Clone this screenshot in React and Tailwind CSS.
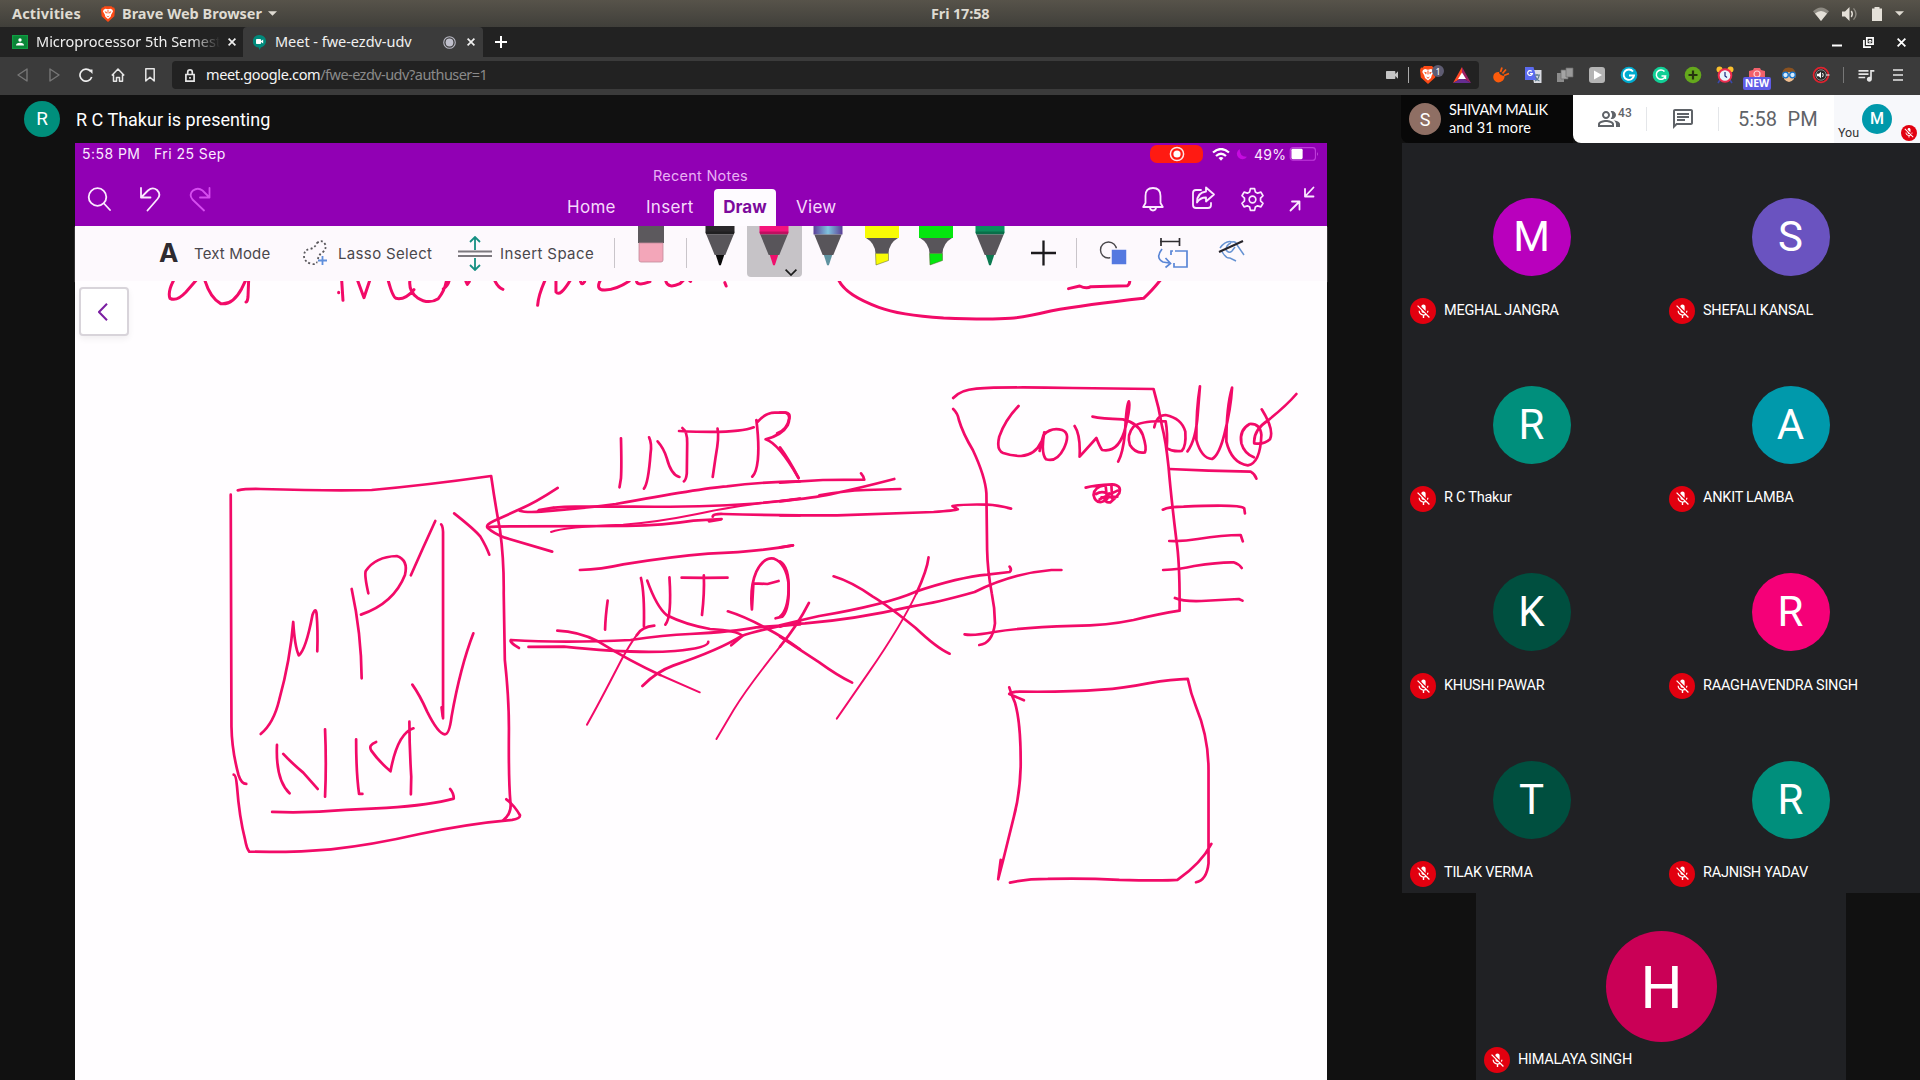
import React from "react";
import { MdMicOff, MdOutlinePeopleAlt, MdOutlineChat, MdVideocam, MdQueueMusic } from "react-icons/md";

const PEOPLE = [
  { name: "MEGHAL JANGRA", color: "bg-[#b900bd]" },
  { name: "SHEFALI KANSAL", color: "bg-[#6a53c0]" },
  { name: "R C Thakur", color: "bg-[#008f7c]" },
  { name: "ANKIT LAMBA", color: "bg-[#0099ab]" },
  { name: "KHUSHI PAWAR", color: "bg-[#004f3f]" },
  { name: "RAAGHAVENDRA SINGH", color: "bg-[#f50078]" },
  { name: "TILAK VERMA", color: "bg-[#004f3f]" },
  { name: "RAJNISH YADAV", color: "bg-[#008f7c]" },
];

function Brave({ className }) {
  return (
    <svg viewBox="0 0 16 18" className={className}>
      <path d="M4 0h8l1.5 1.7L15 1.6l1 2.4-.8 7.5L8 18 .8 11.5 0 4l1-2.4 1.5.1z" fill="#fb4a16" />
      <path d="M3 4l2-1 3 .7L11 3l2 1 .7 2-2 3.6L11 12l-3 2.6L5 12l-.7-2.4-2-3.6z" fill="#fff" />
      <path d="M4 5.8l2.8.8-.8 2zM12 5.8l-2.8.8.8 2zM6 10.6l2 1 2-1-2 2.2zM7.5 4.5h1v4h-1z" fill="#fb4a16" />
    </svg>
  );
}

function Cross({ className }) {
  return (
    <svg viewBox="0 0 8 8" className={className} stroke="#f0f0f0" strokeWidth="1.7" fill="none">
      <path d="M.6.6l6.8 6.8M7.4.6L.6 7.4" />
    </svg>
  );
}

function SystemBar() {
  return (
    <div className="flex h-[27px] items-center bg-gradient-to-b from-[#57534a] to-[#403f3a] text-[14.5px] font-bold text-[#dfdbd2]">
      <span className="ml-[12px] w-[89px] whitespace-nowrap tracking-[0.15px]">Activities</span>
      <Brave className="h-[16px] w-[14px] shrink-0" />
      <span className="ml-[7px] w-[146px] whitespace-nowrap tracking-[0px]">Brave Web Browser</span>
      <svg viewBox="0 0 10 5" className="h-[5px] w-[9px]" fill="#dfdbd2"><path d="M0 0h10L5 5z" /></svg>
      <span className="ml-[654px] w-[70px] whitespace-nowrap tracking-[-0.15px]">Fri 17:58</span>
      <svg viewBox="0 0 16 14" className="ml-[812px] h-[14px] w-[16px]">
        <path d="M8 14L0 4.2Q8-3.4 16 4.2z" fill="#8d8a82" />
        <path d="M8 14L2 6.6q6-5 12 0z" fill="#e4e0d8" />
      </svg>
      <svg viewBox="0 0 16 14" className="ml-[13px] h-[14px] w-[16px]" fill="none" stroke="#e4e0d8" strokeWidth="1.4">
        <path d="M0 4.5h3L7.5 0v14L3 9.5H0z" fill="#e4e0d8" stroke="none" />
        <path d="M9.3 4q2 3 0 6" /><path d="M11.5 1.4q5 5.6 0 11.2" stroke="#8d8a82" />
      </svg>
      <svg viewBox="0 0 10 14" className="ml-[14px] h-[14px] w-[10px]" fill="#e4e0d8"><path d="M2.5 0h5v1.4H10V14H0V1.4h2.5z" /></svg>
      <svg viewBox="0 0 10 5" className="ml-[13px] h-[5px] w-[9px]" fill="#dfdbd2"><path d="M0 0h10L5 5z" /></svg>
    </div>
  );
}

function TabStrip() {
  return (
    <div className="flex h-[30px] items-center bg-[#222222] text-[14.5px] text-[#f0f0f0]">
      <svg viewBox="0 0 16 14" className="ml-[12px] h-[14px] w-[16px] shrink-0">
        <path d="M0 0h16v14H0z" fill="#0f9d43" /><path d="M1.2 1.2h13.6v11.6H1.2z" fill="#0a8537" />
        <circle cx="8" cy="5" r="1.7" fill="#fff" /><path d="M4 10.4q0-2.6 4-2.6t4 2.6z" fill="#fff" />
      </svg>
      <span className="ml-[8px] w-[184px] overflow-hidden whitespace-nowrap tracking-[-0.02px] [mask-image:linear-gradient(to_right,#000_155px,transparent_184px)]">Microprocessor 5th Semest</span>
      <Cross className="ml-[8px] h-[8px] w-[8px]" />
      <div className="ml-[7px] flex h-[30px] w-[240px] items-center rounded-t-[4px] bg-[#3b3b3b]">
        <svg viewBox="0 0 13 15" className="ml-[10px] h-[15px] w-[13px]">
          <path d="M6.5 0a6.3 6.3 0 0 1 1.3 12.5L6.5 15l-.8-2.4A6.3 6.3 0 0 1 6.5 0z" fill="#00897b" />
          <rect x="3" y="4" width="5" height="5" rx=".8" fill="#fff" /><path d="M8 6l2.2-1.6v4.2L8 7z" fill="#fff" />
        </svg>
        <span className="ml-[9px] w-[168px] whitespace-nowrap tracking-[-0.03px]">Meet - fwe-ezdv-udv</span>
        <svg viewBox="0 0 14 14" className="h-[13px] w-[13px]"><circle cx="7" cy="7" r="6.2" fill="none" stroke="#b8b8c4" strokeWidth="1.2" /><circle cx="7" cy="7" r="4.2" fill="#c0c0cc" /></svg>
        <Cross className="ml-[11px] h-[8px] w-[8px]" />
      </div>
      <svg viewBox="0 0 12 12" className="ml-[12px] h-[12px] w-[12px]" stroke="#fff" strokeWidth="2"><path d="M6 0v12M0 6h12" /></svg>
      <svg viewBox="0 0 10 10" className="ml-[1325px] h-[10px] w-[10px]" stroke="#fff" strokeWidth="2"><path d="M0 8.5h10" /></svg>
      <svg viewBox="0 0 11 11" className="ml-[21px] h-[11px] w-[11px]" stroke="#fff" strokeWidth="1.7" fill="none"><path d="M3.8.9h6.3v6.3H3.8z" /><path d="M.9 3v7.2H8" /><path d="M6 3.5h2v1.6H6z" strokeWidth="1" /></svg>
      <svg viewBox="0 0 10 10" className="ml-[23px] h-[9px] w-[9px]" stroke="#fff" strokeWidth="2"><path d="M.7.7l8.6 8.6M9.3.7L.7 9.3" /></svg>
    </div>
  );
}

function Extensions() {
  const cls = "h-[18px] w-[18px] shrink-0";
  return (
    <div className="ml-[13px] flex items-center gap-[14px]">
      <svg viewBox="0 0 18 18" className={cls}><path d="M2 8q-2 4 1 7t8-.5q2-2 1.5-4.5Q7 9 7 6 4 5.5 2 8z" fill="#fb5b0b" /><path d="M8.5 6L10 1.5M10.5 7.5L14 3.5M12 9.500l5-2" stroke="#fb5b0b" strokeWidth="1.8" /></svg>
      <svg viewBox="0 0 18 18" className={cls}>
        <path d="M7 4h10.5v13H10z" fill="#d9dbe2" /><path d="M1 1h8.5l3.5 13H1z" fill="#5b6bf0" />
        <path d="M10 9h6M13 8v2M11 15q4-2 4-6M11.5 11q1 3 4 4" stroke="#5c7a8c" strokeWidth="1.2" fill="none" />
        <path d="M7.8 5.3A2.4 2.4 0 1 0 8.4 7.5H6" stroke="#fff" strokeWidth="1.2" fill="none" />
      </svg>
      <svg viewBox="0 0 18 18" className={cls}><path d="M1 7h7v9H1z" fill="#8c8c8c" /><path d="M5 4h7v9H5z" fill="#a4a4a4" stroke="#6c6c6c" strokeWidth=".7" /><path d="M10 2h7v9h-7z" fill="#9a9a9a" stroke="#6c6c6c" strokeWidth=".7" /></svg>
      <svg viewBox="0 0 18 18" className={cls}><rect x="1" y="1" width="16" height="16" rx="3" fill="#b4b4b4" /><path d="M6 4.5l8 4.5-8 4.5z" fill="#fff" /></svg>
      <svg viewBox="0 0 18 18" className={cls} fill="none" stroke="#fff" strokeWidth="1.9"><circle cx="9" cy="9" r="8.3" fill="#00acd0" stroke="none" /><path d="M13 5.5A5.2 5.2 0 1 0 14 9.5H9" /></svg>
      <svg viewBox="0 0 18 18" className={cls} fill="none" stroke="#fff" strokeWidth="1.5"><circle cx="9" cy="9" r="8.3" fill="#11cf96" stroke="none" /><path d="M12.5 5.5A4.7 4.7 0 1 0 13.5 10H9.5M13.5 10v3" /></svg>
      <svg viewBox="0 0 18 18" className={cls}><circle cx="9" cy="9" r="8.3" fill="#64a81c" /><path d="M9 4.5v9M4.5 9h9" stroke="#26340f" strokeWidth="2.2" /></svg>
      <svg viewBox="0 0 18 18" className={cls}><circle cx="3.5" cy="3.5" r="3" fill="#fbc02d" /><circle cx="14.5" cy="3.5" r="3" fill="#fbc02d" /><path d="M4 14l-2 3M14 14l2 3" stroke="#3949ab" strokeWidth="1.6" /><circle cx="9" cy="9.5" r="6.3" fill="#e8f4fb" stroke="#ee2d4e" strokeWidth="2" /><path d="M9 6v4l2 1.5" stroke="#1a237e" strokeWidth="1.2" fill="none" /></svg>
      <div className="relative h-[18px] w-[18px] shrink-0">
        <svg viewBox="0 0 18 18" className="h-[18px] w-[18px]"><path d="M1 5l4-1 1-2h6l1 2 4 1v9H1z" fill="#f2616b" /><circle cx="9" cy="8" r="3" fill="none" stroke="#ffd2d6" strokeWidth="1.2" /></svg>
        <span className="absolute left-[-5px] top-[11px] flex h-[13px] w-[28px] items-center justify-center rounded-[2px] bg-[#5f5ce6] font-['Open_Sans'] text-[10.5px] font-bold leading-none text-white">NEW</span>
      </div>
      <svg viewBox="0 0 18 18" className={cls}><path d="M2 12Q1 1 9 1.5T16 12z" fill="#8a5220" /><path d="M4 8q5-4 10 0v5q-5 6-10 0z" fill="#f4c08f" /><circle cx="5.5" cy="9" r="2.8" fill="#d5ecff" stroke="#1673c9" strokeWidth="1.3" /><circle cx="12.5" cy="9" r="2.8" fill="#d5ecff" stroke="#1673c9" strokeWidth="1.3" /></svg>
      <svg viewBox="0 0 18 18" className={cls}><circle cx="9" cy="9" r="7.4" fill="#2b2b2b" stroke="#e0232f" strokeWidth="1.8" /><circle cx="9" cy="9" r="5.2" fill="none" stroke="#888" /><path d="M5 7.8h1.800L9 5.800v6.400l-2.200-2H5z" fill="#fff" /><path d="M10.5 7q1.5 2 0 4M14 9h3.5" stroke="#fff" fill="none" /></svg>
    </div>
  );
}

function AddressBar() {
  return (
    <div className="flex h-[38px] items-center bg-[#3b3b3b] pb-[2px]">
      <svg viewBox="0 0 11 14" className="ml-[17px] h-[14px] w-[11px]" fill="none" stroke="#777" strokeWidth="1.4"><path d="M10 1v12L1 7z" strokeLinejoin="round" /></svg>
      <svg viewBox="0 0 11 14" className="ml-[21px] h-[14px] w-[11px]" fill="none" stroke="#777" strokeWidth="1.4"><path d="M1 1v12l9-6z" strokeLinejoin="round" /></svg>
      <svg viewBox="0 0 14 14" className="ml-[19px] h-[14px] w-[14px]" fill="none" stroke="#eee" strokeWidth="1.7"><path d="M11.5 3.2A6 6 0 1 0 12.7 9" /><path d="M9 1.5h4.5V6z" fill="#eee" stroke="none" /></svg>
      <svg viewBox="0 0 14 14" className="ml-[18px] h-[14px] w-[14px]" fill="none" stroke="#e6e6e6" strokeWidth="1.5" strokeLinejoin="round"><path d="M.8 7.5L7 1l6.2 6.5M2.500 6.500v6.700h3V9.500h3v3.700h3V6.500" /></svg>
      <svg viewBox="0 0 10 14" className="ml-[20px] h-[14px] w-[10px]" fill="none" stroke="#e6e6e6" strokeWidth="1.5" strokeLinejoin="round"><path d="M.8.8h8.400v12.200L5 9.300.8 13z" /></svg>
      <div className="ml-[17px] flex h-[28px] w-[1307px] items-center rounded-[4px] bg-[#222222] text-[14.5px]">
        <svg viewBox="0 0 10 13" className="ml-[13px] h-[13px] w-[10px]" fill="none" stroke="#e6e6e6" strokeWidth="1.7"><path d="M.9 5.5h8.200v6.600H.9zM2.700 5.500V3.200a2.300 2.300 0 0 1 4.600 0v2.300M5 8v1.800" /></svg>
        <span className="ml-[11px] w-[1177px] whitespace-nowrap tracking-[-0.55px] text-[#8a8a8a]"><span className="tracking-[-0.35px] text-[#f5f5f5]">meet.google.com</span>/fwe-ezdv-udv?authuser=1</span>
        <MdVideocam className="ml-px h-[16px] w-[16px] text-[#c4c4c4]" />
        <div className="ml-[8px] h-[16px] w-px bg-[#aaa]" />
        <div className="relative ml-[11px] h-[18px] w-[16px]">
          <Brave className="h-[18px] w-[16px]" />
          <span className="absolute left-[12px] top-[-1px] flex h-[12px] w-[12px] items-center justify-center rounded-full bg-[#5e5c72] text-[9px] leading-none text-white">1</span>
        </div>
        <svg viewBox="0 0 18 16" className="ml-[17px] h-[16px] w-[18px]"><path d="M9 0L0 16l9-5z" fill="#ff4724" /><path d="M9 0l9 16-9-5z" fill="#9e1f63" /><path d="M0 16h18l-9-5z" fill="#662d91" /><path d="M9 5.500l4 6.500H5z" fill="#fff" /></svg>
      </div>
      <Extensions />
      <div className="ml-[13px] h-[16px] w-px bg-[#777]" />
      <MdQueueMusic className="ml-[12px] h-[20px] w-[20px] text-[#e6e6e6]" />
      <svg viewBox="0 0 10 12" className="ml-[17px] h-[12px] w-[10px]" stroke="#e6e6e6" strokeWidth="1.5"><path d="M0 1h10M0 6h10M0 11h10" /></svg>
    </div>
  );
}

function PurpleHeader() {
  const stroke = { fill: "none", stroke: "#fbe9ff", strokeWidth: 1.8, strokeLinecap: "round", strokeLinejoin: "round" };
  return (
    <div className="h-[83px] bg-[#9100b4] font-['Inter'] text-[#f6d9fb]">
      <div className="flex h-[22px] items-center text-[14px] text-[#fbeaff]">
        <span className="ml-[7px] mt-[-1px] w-[72px] whitespace-nowrap tracking-[0.45px]">5:58 PM</span>
        <span className="mt-[-1px] w-[996px] whitespace-nowrap tracking-[0.45px]">Fri 25 Sep</span>
        <div className="flex h-[18px] w-[53px] items-center justify-center rounded-[7px] bg-[#ff1a12]">
          <svg viewBox="0 0 16 16" className="h-[16px] w-[16px]"><circle cx="8" cy="8" r="6.6" fill="none" stroke="#ffe5e5" strokeWidth="1.5" /><circle cx="8" cy="8" r="3.6" fill="#fff" /></svg>
        </div>
        <svg viewBox="0 0 18 13" className="ml-[9px] h-[13px] w-[18px]" fill="none" stroke="#fff" strokeWidth="2.2"><path d="M1 4.500q8-7 16 0M4 8q5-4.500 10 0" /><path d="M9 12.800L6.500 10q2.500-2 5 0z" fill="#fff" stroke="none" /></svg>
        <svg viewBox="0 0 12 12" className="ml-[6px] h-[11px] w-[11px]"><path d="M4 0a6 6 0 1 0 8 8.500Q4 9 4 0z" fill="#c60be0" /></svg>
        <span className="ml-[7px] w-[35px] whitespace-nowrap tracking-[0.2px]">49%</span>
        <svg viewBox="0 0 32 15" className="h-[14px] w-[31px]"><rect x=".7" y=".7" width="27" height="13.5" rx="3" fill="none" stroke="#c03bdc" strokeWidth="1.2" /><rect x="2" y="2" width="12" height="11" rx="1.5" fill="#fff" /><path d="M29.500 5q2 2.500 0 5z" fill="#c95be0" /></svg>
      </div>
      <div className="flex h-[61px]">
        <svg viewBox="0 0 24 24" className="ml-[12px] mt-[22px] h-[24px] w-[24px]" {...stroke}><ellipse cx="10.5" cy="10" rx="8.8" ry="8.8" /><path d="M17 16.500l6 6.500" /></svg>
        <svg viewBox="0 0 22 26" className="ml-[28px] mt-[21px] h-[26px] w-[22px]" {...stroke}><path d="M2 2v9.500h9.500M2 11.500L9 4.500q4.500-4 9-.5 4.500 4.500.5 9L8.500 24.500" /></svg>
        <svg viewBox="0 0 22 26" className="ml-[28px] mt-[21px] h-[26px] w-[22px]" {...stroke} stroke="#d64df0"><path d="M20.500 2v9.500H11M20.500 11.500L13.500 4.500Q9 1 4 4.500q-4.500 4-.5 9L15 24.500" /></svg>
        <div className="ml-[355px] flex h-[61px] w-[278px] flex-col">
          <div className="flex h-[24px] items-center justify-center pr-[9px] text-[14.5px] leading-none tracking-[0.25px] text-[#e9b0f4]"><span className="mt-[-2px]">Recent Notes</span></div>
          <div className="flex h-[37px] items-center text-[17px] leading-none">
            <span className="ml-px w-[79px] whitespace-nowrap tracking-[0.3px]">Home</span>
            <span className="w-[68px] whitespace-nowrap tracking-[0.3px]">Insert</span>
            <span className="flex h-[37px] w-[62px] items-center justify-center rounded-t-[4px] bg-[#fefbff] font-bold text-[#7c0a9c]">Draw</span>
            <span className="ml-[20px] whitespace-nowrap tracking-[0.3px]">View</span>
          </div>
        </div>
        <svg viewBox="0 0 24 26" className="ml-[297px] mt-[21px] h-[26px] w-[24px]" {...stroke}><path d="M4.500 17V10q0-8 7.500-8t7.500 8v7l2.300 4H2.200zM9 21q0 3.500 3 3.500t3-3.500" /></svg>
        <svg viewBox="0 0 26 26" className="ml-[25px] mt-[20px] h-[26px] w-[26px]" {...stroke}><path d="M11 5H6Q3 5 3 8v12q0 3 3 3h12q3 0 3-3v-2" /><path d="M16 2.500l8 7-8 7v-4q-6 0-9 5 0-10 9-11z" /></svg>
        <svg viewBox="0 0 24 24" className="ml-[24px] mt-[22px] h-[25px] w-[25px]" {...stroke} strokeWidth="1.6"><circle cx="12" cy="12" r="3.2" /><path d="M10 1.500h4l.7 3.200 2.200 1.200 3.200-1 2 3.500-2.400 2.300v2.600l2.400 2.300-2 3.500-3.200-1-2.200 1.200-.7 3.200h-4l-.7-3.200-2.200-1.200-3.200 1-2-3.500 2.400-2.300v-2.600L1.900 8.400l2-3.500 3.200 1 2.200-1.200z" /></svg>
        <svg viewBox="0 0 26 26" className="ml-[24px] mt-[21px] h-[26px] w-[26px]" {...stroke}><path d="M24.500 1.500l-8.500 9M16 3v7.500h8.500M1.500 24.500l9-9M3 15.500h7.500v8" /></svg>
      </div>
    </div>
  );
}

function Pen({ cap, tip, className }) {
  return (
    <svg viewBox="0 0 30 41" className={className}>
      <path d="M.5 0h29v6.500L28.800 8.500H1.200L.5 6.500z" fill={cap} />
      <path d="M.5 5.500h29v1L28.800 8.500H1.200L.5 6.500z" fill="#000" opacity=".22" />
      <path d="M1.300 8.500h27.400L20.300 29H9.700z" fill="#58555a" />
      <path d="M10.800 29h8.400l-3 9.300q-1.200 2.400-2.400 0z" fill={tip} />
    </svg>
  );
}

function Highlighter({ color, className }) {
  return (
    <svg viewBox="0 0 34 40" className={className}>
      <path d="M0 0h34v12H0z" fill={color} />
      <path d="M1 12h32q-9 5-9.500 15.500h-13Q10 17 1 12z" fill="#58555a" />
      <path d="M10.500 27.500h13v7L11 39z" fill={color} stroke="#55602a" strokeWidth=".5" />
    </svg>
  );
}

function DrawRibbon() {
  return (
    <div className="flex h-[55px] items-start bg-[#fdf9fd] font-['Inter'] text-[15px] leading-none text-[#4a474c] shadow-[0_1px_1px_#d9d5da]">
      <span className="ml-[84px] mt-[14px] w-[35px] text-[26px] font-bold text-[#2e2b30]">A</span>
      <span className="mt-[20px] w-[108px] whitespace-nowrap tracking-[0.15px]">Text Mode</span>
      <svg viewBox="0 0 27 27" className="mt-[14px] h-[27px] w-[27px]" fill="none">
        <path d="M15 3q5-4 8 1 2 4-2 8-5 3-5 8-1 5-6 4-8-2-8-8 0-6 6-7 5-1 7-6z" stroke="#5a585c" strokeWidth="1.8" strokeDasharray="2 2.2" />
        <path d="M20.500 14h8v13h-13v-6z" fill="#fdf9fd" /><path d="M20.500 16v9M16 20.500h9" stroke="#5f8fdc" strokeWidth="1.8" />
      </svg>
      <span className="ml-[9px] mt-[20px] w-[120px] whitespace-nowrap tracking-[0.35px]">Lasso Select</span>
      <svg viewBox="0 0 34 35" className="mt-[10px] h-[35px] w-[34px]" fill="none">
        <path d="M0 15.500h34M0 20h34" stroke="#7c787e" strokeWidth="2" />
        <path d="M17 14V2M12 6l5-5 5 5M17 22v11M12 29l5 5 5-5" stroke="#158f82" strokeWidth="1.8" />
      </svg>
      <span className="ml-[8px] mt-[20px] w-[114px] whitespace-nowrap tracking-[0.4px]">Insert Space</span>
      <div className="mt-[12px] h-[30px] w-px bg-[#c9c5ca]" />
      <svg viewBox="0 0 26 37" className="ml-[23px] h-[37px] w-[26px]"><path d="M0 0h26v17H0z" fill="#5c595d" /><path d="M1 17h24v17q0 2-2 2H3q-2 0-2-2z" fill="#f3a6b9" stroke="#c28a99" strokeWidth=".8" /></svg>
      <div className="ml-[22px] mt-[12px] h-[30px] w-px bg-[#c9c5ca]" />
      <Pen cap="#2a282b" tip="#0a0a0a" className="ml-[18px] h-[41px] w-[30px]" />
      <div className="ml-[12px] flex h-[51px] w-[55px] rounded-b-[4px] bg-[#c6c3c7]">
        <Pen cap="#f5147c" tip="#ef0f6c" className="ml-[12px] h-[41px] w-[30px]" />
        <svg viewBox="0 0 12 7" className="ml-[-4px] mt-[43px] h-[7px] w-[12px]" fill="none" stroke="#1a1a1a" strokeWidth="1.7"><path d="M.6.6L6 6 11.400.6" /></svg>
      </div>
      <svg viewBox="0 0 30 41" className="ml-[11px] h-[41px] w-[30px]">
        <defs><linearGradient id="galaxy"><stop offset="0" stopColor="#5b3f98" /><stop offset=".5" stopColor="#7fc4de" /><stop offset="1" stopColor="#5a3d96" /></linearGradient></defs>
        <path d="M.5 0h29v8.500H.5z" fill="url(#galaxy)" /><path d="M1.300 8.500h27.400L20.300 29H9.700z" fill="#58555a" /><path d="M10.800 29h8.400l-3 9.300q-1.200 2.400-2.400 0z" fill="#5f93a0" />
      </svg>
      <Highlighter color="#f8fb05" className="ml-[22px] h-[40px] w-[34px]" />
      <Highlighter color="#05e60f" className="ml-[20px] h-[40px] w-[34px]" />
      <Pen cap="#0b8f5e" tip="#0b7a50" className="ml-[22px] h-[41px] w-[30px]" />
      <svg viewBox="0 0 26 26" className="ml-[26px] mt-[14px] h-[26px] w-[25px]" stroke="#1c1a1d" strokeWidth="2.4"><path d="M13 0v26M0 13h26" /></svg>
      <div className="ml-[20px] mt-[12px] h-[30px] w-px bg-[#c9c5ca]" />
      <svg viewBox="0 0 29 25" className="ml-[22px] mt-[15px] h-[25px] w-[29px]"><circle cx="9.5" cy="9" r="8" fill="none" stroke="#4a484c" strokeWidth="1.4" /><path d="M12 8h16v16H12z" fill="#5479e0" stroke="#fdf9fd" strokeWidth="1.5" /></svg>
      <svg viewBox="0 0 32 32" className="ml-[29px] mt-[11px] h-[32px] w-[32px]" fill="none" strokeWidth="1.7"><path d="M3 4.500h20M4 1v8M22.500 1v8" stroke="#2f2d31" /><path d="M18 14h12v16H17v-4M14 18v-4h2" stroke="#5a86d6" /><path d="M5 12q-7 9 1 13l6 1M8.500 21l5 5.500-5 4" stroke="#5a86d6" /></svg>
      <svg viewBox="0 0 28 24" className="ml-[29px] mt-[13px] h-[24px] w-[28px]" fill="none"><path d="M2 9Q8 1 14 3q4-1 5 3l7 10M3 11q5 9 9 8l6 3M13 4q-5 2-5 7 3 4 6 1l3-4" stroke="#6592d2" strokeWidth="1.5" /><path d="M1 13L25 2" stroke="#26242a" strokeWidth="2" /></svg>
    </div>
  );
}

/* Handwritten strokes of the note, grouped by the part of the page they cover. */
const CUT_HEADING = [
  "M42 8Q22 45 30 64Q50 75 78 45L110 8M134 8Q150 62 182 80Q218 85 245 35L258 8M266 8L264 60Q262 76 258 75",
  "M536 46l0 1M545 8L549 70M592 8L612 62L630 8",
  "M684 8Q698 60 708 64Q735 70 762 38M750 8Q745 42 772 62Q805 84 835 65Q855 40 860 8M850 36Q866 24 868 8",
  "M918 14l4 8 6-8M1005 12Q1015 32 1029 37M1156 8Q1135 55 1133 85M1188 8L1188 45Q1200 62 1232 8M1262 14q4 12 12 0",
  "M1322 8Q1305 40 1335 39Q1370 38 1408 12M1430 14Q1435 28 1470 14M1518 14Q1525 36 1560 20L1570 10M1590 12l2 1",
];
const CUT_LOOP = [
  "M190 428L193 438",
  "M445 420Q460 465 535 502Q580 525 680 534Q780 540 830 535Q860 532 920 513Q1000 494 1128 475Q1145 455 1166 420",
  "M960 446L985 438Q1000 448 1010 440L1092 437Q1098 432 1097 420",
];
const LEFT = [
  "M48 331Q70 326 110 327Q300 333 410 330Q560 315 733 288Q745 380 757 450Q768 540 767 640L770 840Q782 960 781 1060Q780 1200 785 1265Q790 1300 765 1322",
  "M29 344L31 1040Q32 1110 50 1185Q58 1212 71 1212M37 1184Q43 1184 46 1220Q52 1310 68 1380Q72 1405 79 1415Q200 1418 300 1408Q410 1395 540 1362Q680 1330 790 1320Q812 1316 811 1306Q795 1275 774 1258",
  "M110 1062Q145 1030 160 960Q190 840 198 726Q202 800 213 826Q232 810 250 705Q258 680 261 700Q265 750 263 814",
  "M356 627Q382 760 383 895M401 640Q390 585 394 573Q420 530 478 528Q510 540 500 585Q470 670 381 704M516 586Q550 500 582 423",
  "M598 433Q604 440 603 470L603 1015M599 982L602 1010M633 400Q690 450 704 470Q720 500 728 524M520 914Q540 945 560 995Q590 1062 608 1063Q620 1063 626 1010Q650 860 685 760",
  "M154 1095Q150 1200 188 1240M171 1122Q190 1145 225 1178L264 1227M284 1048Q288 1150 284 1250M368 1078Q368 1180 376 1242L385 1242M422 1086Q400 1095 409 1112Q430 1145 461 1174Q480 1060 523 1045M512 1025Q512 1100 517 1190L516 1243",
  "M141 1296Q240 1300 340 1290L450 1284Q570 1275 632 1256Q632 1240 622 1227",
  "M1084 175Q1086 260 1084 295L1080 322M1160 172Q1168 190 1164 220Q1158 310 1146 326M1183 184Q1200 205 1208 235Q1220 285 1242 291M1250 144Q1264 155 1263 190L1262 280Q1260 300 1254 304M1241 153Q1400 162 1443 142M1345 146Q1350 170 1340 230L1332 291",
  "M1450 120Q1458 190 1454 240Q1450 280 1439 290M1454 125Q1475 98 1500 98L1530 98Q1545 105 1535 135Q1520 165 1475 178Q1510 190 1564 294",
  "M913 324Q850 370 810 388L740 423Q718 434 723 443Q740 460 770 473L898 515",
  "M725 442Q740 439 800 439L1100 438Q1200 436 1280 422L1356 417M1322 424L1355 418",
  "M810 392Q830 400 900 392Q1000 383 1070 372Q1300 325 1370 319Q1460 306 1568 304",
  "M860 393Q900 380 960 380L1120 380Q1400 383 1568 356M862 390L902 383M1332 410Q1332 401 1360 402Q1450 405 1568 406",
  "M973 570Q1030 568 1090 553Q1220 530 1320 521Q1460 515 1549 496",
  "M1048 662Q1042 710 1041 749M1138 594Q1148 640 1146 739M1155 602Q1180 680 1208 706Q1260 735 1325 747Q1400 752 1412 768L1382 796M1215 592Q1222 710 1204 734M1248 593Q1310 594 1372 593M1308 586Q1310 640 1303 705",
  "M1438 688Q1432 620 1450 575Q1470 530 1498 536Q1530 550 1537 610Q1540 690 1520 710L1502 715M1438 688L1442 610L1480 612L1510 603",
  "M808 804Q780 785 787 780Q930 790 1110 780Q1200 765 1270 762Q1390 755 1450 742L1568 733M834 801L930 800Q1120 822 1230 813Q1320 804 1320 786",
  "M912 752Q970 755 1020 783Q1110 845 1190 885M1174 737Q1140 740 1127 765M1142 918Q1180 875 1225 857Q1350 810 1410 768Q1450 752 1568 726M1373 694Q1420 710 1482 748Q1520 770 1568 808",
];
const LEFT_FINE = [
  "M895 456Q930 440 1090 434Q1180 427 1290 402Q1400 375 1568 356",
  "M1190 885L1297 937M1127 765Q1110 790 1085 840Q1020 980 992 1034",
];
const RIGHT = [
  "M0 128L14 128Q30 128 26 145Q20 180 -8 190M0 232Q25 268 52 324M0 338L120 330L236 329Q235 320 227 310M0 394Q100 382 140 373Q220 355 320 327M110 376Q180 362 240 360L337 357M0 436L160 436L430 426Q490 422 498 418L483 408Q520 402 580 404Q610 405 647 416",
  "M0 532L36 526M0 574Q26 590 24 660Q22 720 0 740",
  "M0 766Q60 750 110 738Q300 703 380 665Q500 622 580 614L643 606Q650 600 643 590M0 770Q20 762 70 760Q210 748 370 709Q440 698 545 666Q650 610 760 600L788 600",
  "M0 800Q60 842 110 877Q160 916 202 938M81 699Q50 765 0 830M150 619Q200 635 260 680Q300 705 380 774Q440 835 475 851M416 562Q412 600 382 670",
  "M485 84Q505 60 550 56Q620 50 820 54L1046 57Q1062 115 1070 170Q1080 210 1088 290Q1095 380 1110 510Q1120 580 1119 722Q1060 732 990 750Q920 766 820 768Q680 772 600 786Q540 798 517 793",
  "M485 117Q498 130 501 150Q512 190 540 240Q575 320 578 370L580 540Q581 600 593 670Q602 715 602 760Q595 820 558 825",
  "M668 108Q630 150 614 200Q605 240 625 249Q650 258 675 258Q715 255 732 215M740 187Q730 250 745 268Q775 278 795 235Q815 190 790 180Q760 170 738 195Q730 220 727 243M825 168Q842 195 839 260Q860 235 886 204Q895 230 902 240Q950 250 968 170Q982 110 977 94Q970 100 966 190Q960 250 947 275",
  "M875 140Q900 146 960 148Q1005 160 1016 195Q1028 235 1022 247Q995 252 980 225Q970 195 990 170Q1010 152 1080 154Q1086 190 1083 235M1048 172Q1055 135 1080 135Q1125 145 1135 185Q1138 230 1125 243Q1100 246 1084 235M1141 244Q1165 210 1170 130L1176 49M1176 49Q1165 120 1166 210Q1180 265 1210 267Q1230 255 1245 190Q1262 120 1266 53Q1250 110 1250 215Q1265 280 1310 286Q1345 280 1348 195Q1345 160 1315 162Q1285 180 1292 220Q1300 250 1327 262",
  "M1349 118Q1385 180 1372 208Q1355 225 1328 220Q1325 180 1368 150Q1420 105 1446 72",
  "M856 353Q880 345 930 343Q958 345 950 370Q940 385 925 397Q912 400 908 385M908 346Q880 350 878 375Q882 398 900 396Q920 392 922 370M885 372Q900 362 915 370M895 388L945 362M912 348L915 380M928 345L930 385M900 382L945 380",
  "M1090 297L1200 302L1318 305Q1330 312 1334 326M1072 419Q1090 410 1130 410Q1290 402 1300 415L1302 430M1090 513Q1130 515 1170 507Q1240 495 1290 495L1296 514M1073 600Q1120 598 1160 588Q1230 576 1270 577Q1285 582 1293 594M1106 684Q1130 695 1180 693L1285 687L1295 692",
  "M642 952Q650 980 658 998Q675 1060 674 1190Q672 1270 655 1340L625 1470L611 1528L618 1470M683 991L642 972Q650 966 670 965Q800 967 900 959Q960 955 1030 940Q1100 928 1142 927Q1150 970 1165 1010Q1200 1100 1200 1200L1200 1480Q1195 1530 1165 1537M644 1538Q690 1527 750 1527Q850 1524 950 1530Q1070 1533 1113 1530Q1180 1480 1208 1422",
];
const RIGHT_FINE = [
  "M0 830Q-90 950 -130 1020L-178 1107",
  "M382 670Q340 765 250 905L159 1046",
];

function Strokes({ paths, transform, width = 3.5 }) {
  return (
    <g transform={transform}>
      {paths.map((d) => <path key={d} d={d} strokeWidth={width} vectorEffect="non-scaling-stroke" />)}
    </g>
  );
}

function Canvas() {
  return (
    <div className="relative h-[799px] bg-[#fffdff]">
      <svg viewBox="75 281 1252 799" className="h-[799px] w-[1252px]" fill="none" stroke="#f20a68" strokeLinecap="round" strokeLinejoin="round">
        <Strokes paths={CUT_HEADING} transform="translate(160 277) scale(.3333)" width={3} />
        <Strokes paths={CUT_LOOP} transform="translate(640 140) scale(.4464 .3333)" width={3} />
        <Strokes paths={LEFT} transform="translate(220 380) scale(.3699 .3333)" width={2.7} />
        <Strokes paths={LEFT_FINE} transform="translate(220 380) scale(.3699 .3333)" width={2} />
        <Strokes paths={RIGHT} transform="translate(780 370) scale(.3571 .3333)" width={2.7} />
        <Strokes paths={RIGHT_FINE} transform="translate(780 370) scale(.3571 .3333)" width={1.9} />
      </svg>
      <div className="absolute left-[4px] top-[6px] flex h-[49px] w-[50px] items-center justify-center rounded-[4px] border-2 border-[#d8d4da] bg-white shadow-[0_3px_6px_rgba(0,0,0,0.06)]">
        <svg viewBox="0 0 10 18" className="mr-[2px] h-[18px] w-[10px]" fill="none" stroke="#7b1fa2" strokeWidth="2"><path d="M9 .7L1 9l8 8.300" /></svg>
      </div>
    </div>
  );
}

function MicBadge({ small }) {
  return (
    <span className={small ? "flex h-[16px] w-[16px] shrink-0 items-center justify-center rounded-full bg-[#e2000f]" : "flex h-[26px] w-[26px] shrink-0 items-center justify-center rounded-full bg-[#e2000f]"}>
      <MdMicOff className={small ? "h-[12px] w-[12px] text-white" : "h-[17px] w-[17px] text-white"} />
    </span>
  );
}

function Tile({ person }) {
  return (
    <div className="flex h-[187.5px] flex-col">
      <div className={`mx-auto mt-[55px] flex h-[78px] w-[78px] shrink-0 items-center justify-center rounded-full text-[42px] leading-none text-white ${person.color}`}>{person.name[0]}</div>
      <div className="ml-[8px] mt-[22px] flex items-center gap-[8px] text-[14.5px] leading-none text-white">
        <MicBadge />
        <span className="whitespace-nowrap tracking-[-0.25px]">{person.name}</span>
      </div>
    </div>
  );
}

function MeetControls() {
  return (
    <div className="flex h-[48px] w-[519px]">
      <div className="flex w-[172px] items-center rounded-bl-[8px] bg-[#080808]">
        <span className="ml-[8px] flex h-[32px] w-[32px] shrink-0 items-center justify-center rounded-full bg-[#8f6f64] text-[18px] text-white">S</span>
        <span className="ml-[8px] whitespace-nowrap font-['Lato'] text-[14.5px] leading-[18px] text-white"><span className="tracking-[-0.4px]">SHIVAM MALIK</span><br /><span className="tracking-[0.15px]">and 31 more</span></span>
      </div>
      <div className="flex w-[261px] items-center rounded-bl-[8px] bg-white text-[#5f6368]">
        <MdOutlinePeopleAlt className="ml-[24px] h-[24px] w-[24px] shrink-0" />
        <span className="mt-[-12px] ml-[-3px] w-[28px] text-[12px] font-medium leading-none tracking-[0.3px]">43</span>
        <div className="h-[24px] w-px bg-[#e4e6e9]" />
        <MdOutlineChat className="ml-[24px] h-[24px] w-[24px]" />
        <div className="ml-[23px] h-[24px] w-px bg-[#e4e6e9]" />
        <span className="ml-[19px] whitespace-pre text-[20px] leading-none tracking-[0.15px]">5:58  PM</span>
      </div>
      <div className="flex flex-1 bg-[#f7f8fb]">
        <span className="ml-[4px] mt-[32px] w-[24px] text-[12.5px] leading-none text-[#333]">You</span>
        <span className="mt-[9px] flex h-[30px] w-[30px] items-center justify-center rounded-full bg-[#0099ab] text-[16px] font-medium leading-none text-white">M</span>
        <span className="ml-[9px] mt-[30px]"><MicBadge small /></span>
      </div>
    </div>
  );
}

export default function App() {
  return (
    <div className="h-[1080px] w-[1920px] overflow-hidden bg-[#111111] font-['Noto_Sans',sans-serif]">
      <SystemBar />
      <TabStrip />
      <AddressBar />
      <div className="flex h-[985px] font-['Roboto',sans-serif]">
        <div className="w-[1401px]">
          <div className="flex h-[48px] items-center">
            <span className="ml-[24px] flex h-[36px] w-[36px] items-center justify-center rounded-full bg-[#008f7c] text-[19px] text-white">R</span>
            <span className="ml-[16px] whitespace-nowrap text-[18px] text-white">R C Thakur is presenting</span>
          </div>
          <div className="ml-[75px] w-[1252px]">
            <PurpleHeader />
            <DrawRibbon />
            <Canvas />
          </div>
        </div>
        <div className="w-[519px]">
          <MeetControls />
          <div className="ml-px grid h-[750px] grid-cols-2 bg-[#202124]">
            {PEOPLE.map((p) => <Tile key={p.name} person={p} />)}
          </div>
          <div className="ml-[75px] flex h-[187px] w-[370px] flex-col bg-[#202124]">
            <div className="mx-auto mt-[38px] flex h-[111px] w-[111px] shrink-0 items-center justify-center rounded-full bg-[#ca0056] pl-px pt-[2px] text-[59px] leading-none text-white">H</div>
            <div className="ml-[8px] mt-[5px] flex items-center gap-[8px] text-[14.5px] leading-none text-white">
              <MicBadge />
              <span className="whitespace-nowrap tracking-[-0.25px]">HIMALAYA SINGH</span>
            </div>
          </div>
        </div>
      </div>
    </div>
  );
}
